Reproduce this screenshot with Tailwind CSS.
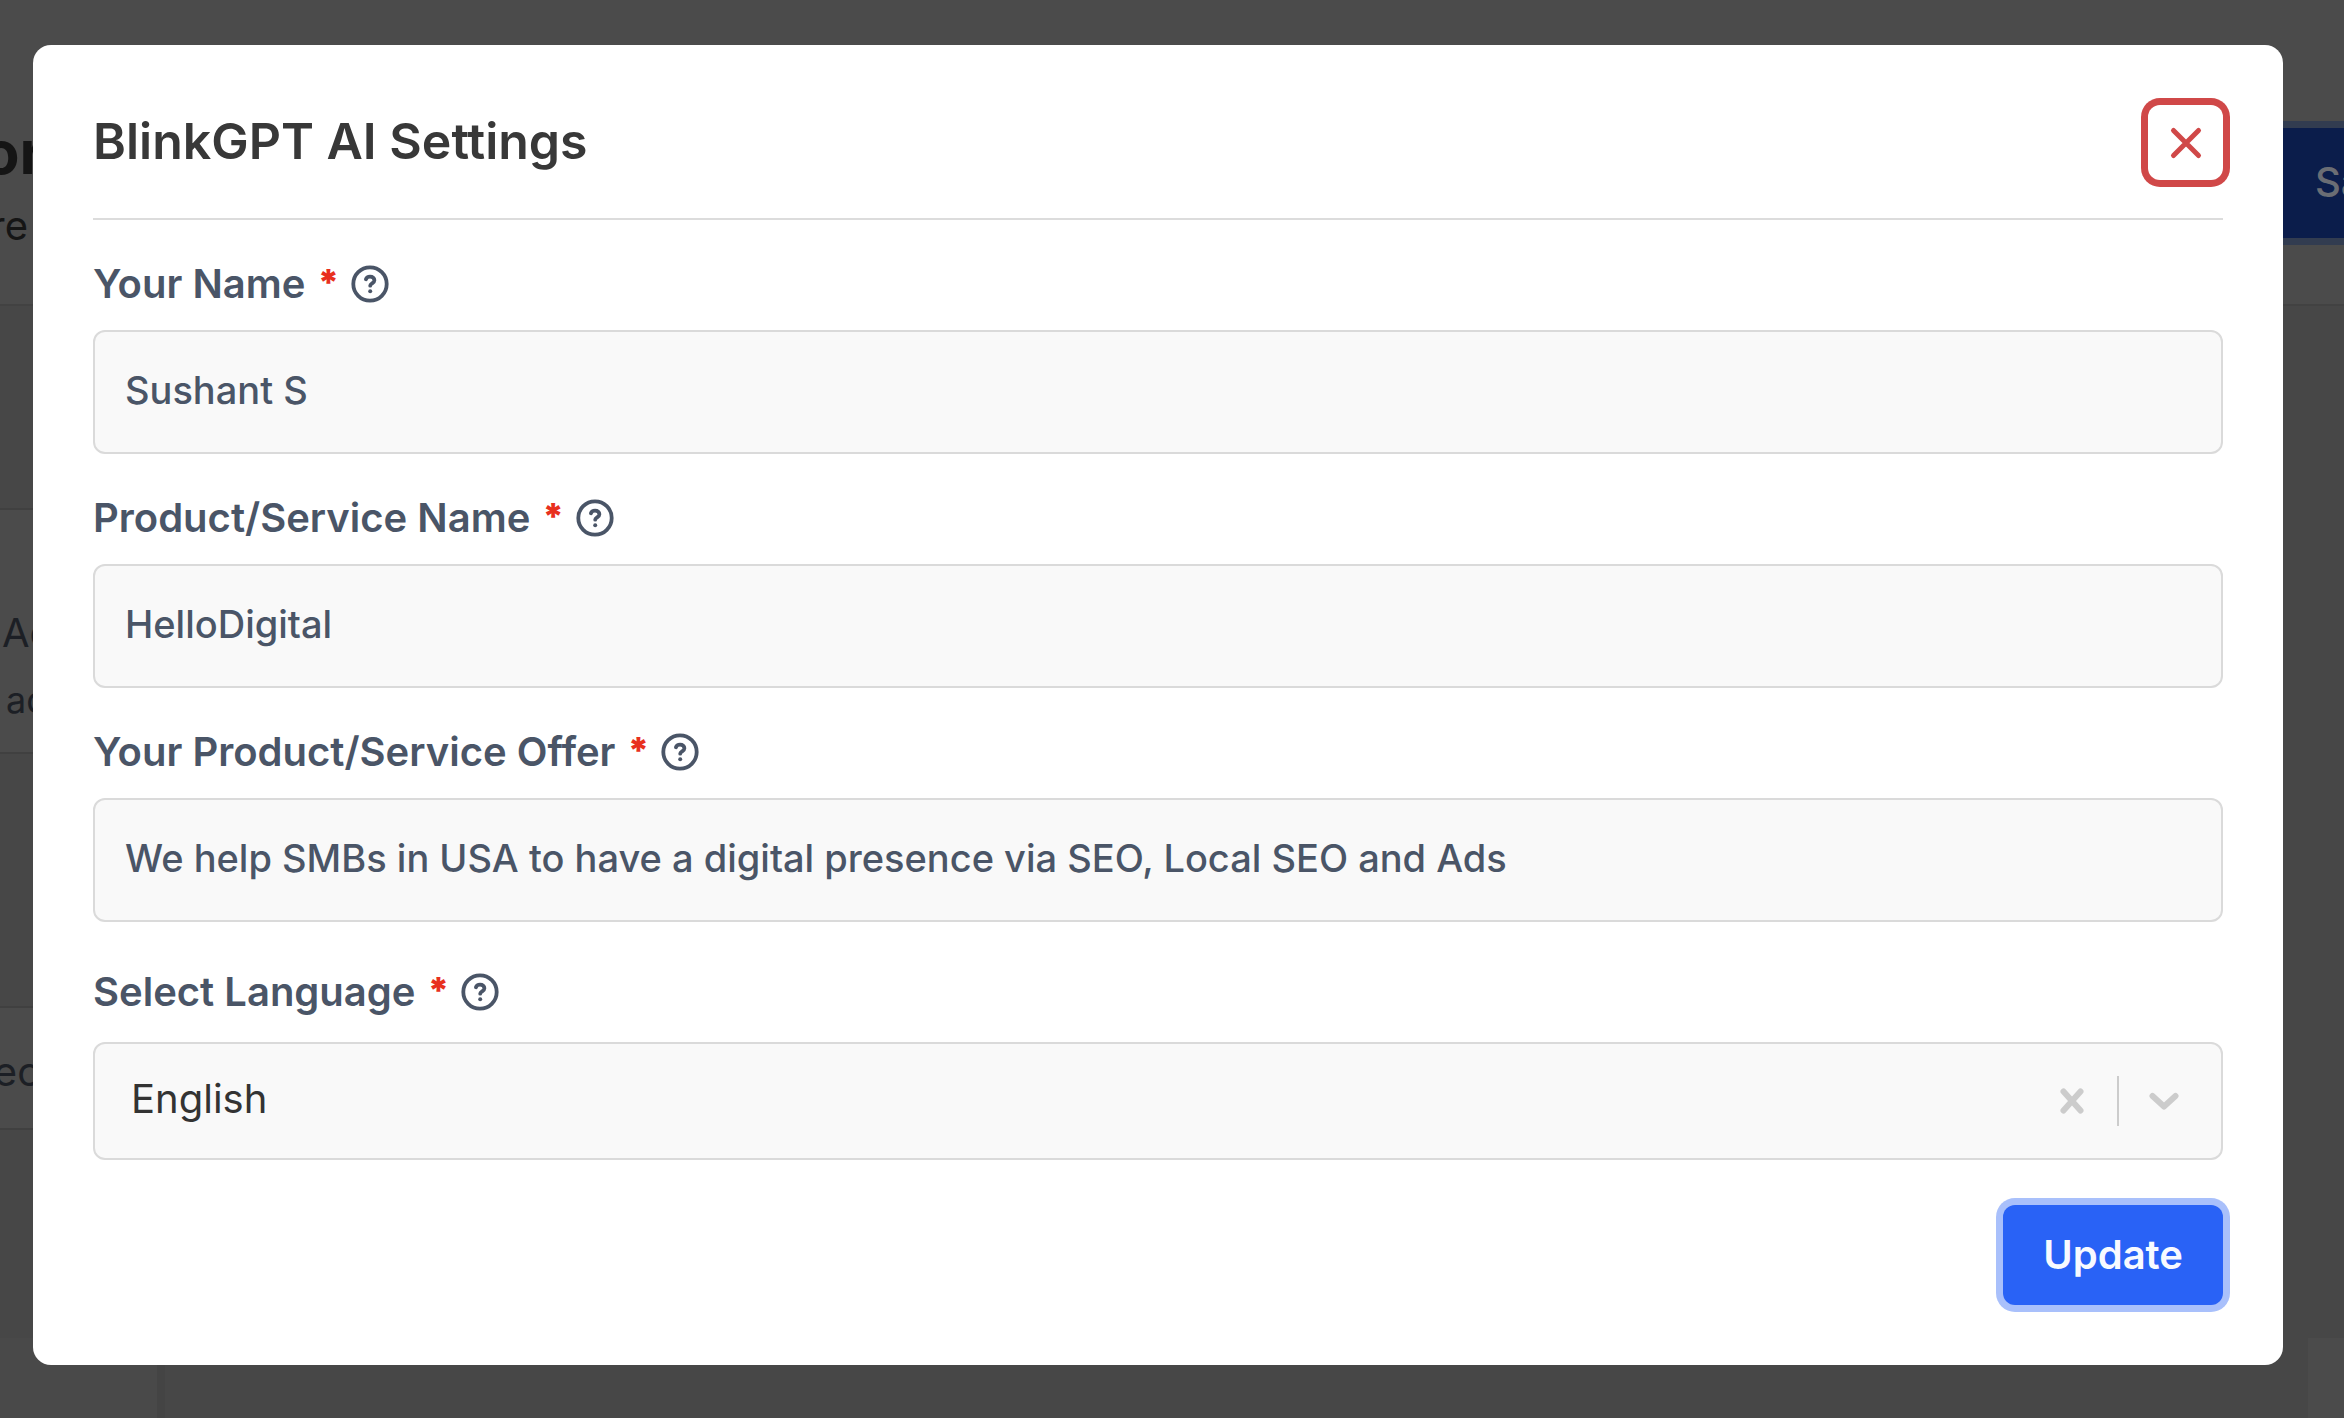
<!DOCTYPE html>
<html lang="en">
<head>
<meta charset="utf-8">
<meta name="viewport" content="width=device-width, initial-scale=1">
<title>BlinkGPT AI Settings</title>
<script src="https://cdn.jsdelivr.net/npm/@tailwindcss/browser@4"></script>
</head>
<body class="relative min-h-screen overflow-hidden bg-[#474747] font-['Inter',sans-serif]">

<!-- icon shared by all field labels -->
<svg class="hidden" aria-hidden="true">
  <symbol id="help" viewBox="0 0 38 38" fill="none" stroke="currentColor" stroke-linecap="round" stroke-linejoin="round">
    <circle cx="19" cy="19" r="16.700" stroke-width="3.800"/>
    <path d="M14.900 14.300C15.500 12.500 17.100 11.700 19.100 11.700c2.600 0 4.300 1.400 4.300 3.500 0 3-4.200 3.100-4.200 5.500" stroke-width="3.800"/>
    <circle cx="19.200" cy="26.200" r="2" fill="currentColor" stroke="none"/>
  </symbol>
</svg>

<!-- dimmed page behind the dialog -->
<div class="absolute inset-0 flex flex-col overflow-hidden whitespace-nowrap text-[40px] leading-[48px] text-[#1c1f25]" aria-hidden="true">
  <header class="flex h-[306px] shrink-0 items-start justify-between border-b-2 border-[#424242] bg-[#4b4b4b] pt-[114px] text-[#151515]">
    <div>
      <p class="flex w-11 justify-end text-[60px] leading-[76px] font-bold">or</p>
      <p class="mt-3 flex w-7 justify-end">re</p>
    </div>
    <button type="button" tabindex="-1" class="mt-3.5 flex h-[110px] w-24 items-center bg-[#0b1d4b] pb-0.5 pl-[67px] font-medium text-[#6a6d74] ring-7 ring-[#323c50]">Save</button>
  </header>
  <section class="mt-[202px] mr-24 h-[246px] shrink-0 border-y-2 border-[#404040] bg-[#4b4b4b] pt-[96px]">
    <p class="pl-0.5 leading-[54px]">Ad</p>
    <p class="mt-4 pl-1.5 text-[36px]">ad</p>
  </section>
  <section class="mt-[252px] mr-24 h-[124px] shrink-0 border-y-2 border-[#404040] bg-[#4b4b4b] pt-[40px]">
    <p class="flex w-10 justify-end">ec</p>
  </section>
  <div class="mt-52 flex grow items-stretch justify-between">
    <div class="w-[165px] border-r-8 border-[#444444] bg-[#494949]"></div>
    <div class="w-9 bg-[#4b4b4b]"></div>
  </div>
</div>

<!-- dialog -->
<main class="relative pt-[45px] pr-[61px] pb-[53px] pl-[33px]">
  <form role="dialog" aria-labelledby="title" class="flex flex-col rounded-[18px] bg-white p-[60px] text-[#4a5567]">
    <div class="flex items-center justify-between border-b-2 border-[#dcdcdc] pb-[38px]">
      <h1 id="title" class="pb-1 text-[50px] leading-[60px] font-semibold text-[#383838]">BlinkGPT AI Settings</h1>
      <button type="button" aria-label="Close" class="flex size-[75px] items-center justify-center rounded-xl text-[#d04848] ring-7 ring-[#d04848]">
        <svg class="size-[34px]" viewBox="0 0 34 34" fill="none" stroke="currentColor" stroke-width="5" stroke-linecap="round"><path d="M4.500 4.500l25 25M29.500 4.500l-25 25"/></svg>
      </button>
    </div>

    <div class="mt-11 flex h-10 items-center text-[40px] leading-10 font-semibold">
      <label for="name">Your Name</label><span class="ml-3 pb-1 text-[36px] font-black text-[#e8301e]">*</span>
      <svg class="ml-3 size-[38px]" role="img" aria-label="Help"><use href="#help"/></svg>
    </div>
    <input id="name" type="text" value="Sushant S" class="mt-[26px] h-[124px] w-full rounded-xl border-2 border-[#dadada] bg-[#f9f9f9] px-[30px] pb-1 text-[38px] font-[450]">

    <div class="mt-11 flex h-10 items-center text-[40px] leading-10 font-semibold">
      <label for="product">Product/Service Name</label><span class="ml-3 pb-1 text-[36px] font-black text-[#e8301e]">*</span>
      <svg class="ml-3 size-[38px]" role="img" aria-label="Help"><use href="#help"/></svg>
    </div>
    <input id="product" type="text" value="HelloDigital" class="mt-[26px] h-[124px] w-full rounded-xl border-2 border-[#dadada] bg-[#f9f9f9] px-[30px] pb-1 text-[38px] font-[450]">

    <div class="mt-11 flex h-10 items-center text-[40px] leading-10 font-semibold">
      <label for="offer">Your Product/Service Offer</label><span class="ml-3 pb-1 text-[36px] font-black text-[#e8301e]">*</span>
      <svg class="ml-3 size-[38px]" role="img" aria-label="Help"><use href="#help"/></svg>
    </div>
    <input id="offer" type="text" value="We help SMBs in USA to have a digital presence via SEO, Local SEO and Ads" class="mt-[26px] h-[124px] w-full rounded-xl border-2 border-[#dadada] bg-[#f9f9f9] px-[30px] pb-1 text-[38px] font-[450]">

    <div class="mt-[50px] flex h-10 items-center text-[40px] leading-10 font-semibold">
      <label for="language">Select Language</label><span class="ml-3 pb-1 text-[36px] font-black text-[#e8301e]">*</span>
      <svg class="ml-3 size-[38px]" role="img" aria-label="Help"><use href="#help"/></svg>
    </div>
    <div class="relative mt-[30px]">
      <select id="language" class="block h-[118px] w-full appearance-none rounded-xl border-2 border-[#dadada] bg-[#f9f9f9] px-9 pb-1 text-[40px] text-[#333333]"><option>English</option></select>
      <div class="pointer-events-none absolute inset-y-0 right-0 flex items-center pr-[43px] text-[#cccccc]">
        <button type="button" aria-label="Clear language" class="pointer-events-auto mr-8">
          <svg class="h-[28px] w-[26px]" viewBox="0 0 26 28" fill="none" stroke="currentColor" stroke-width="6" stroke-linecap="round"><path d="M4.500 4.500l17 19M21.500 4.500l-17 19"/></svg>
        </button>
        <span class="h-[50px] w-0.5 bg-[#cccccc]"></span>
        <svg class="ml-[29px] h-[18px] w-8" viewBox="0 0 32 18" fill="none" stroke="currentColor" stroke-width="6" stroke-linecap="round" stroke-linejoin="round"><path d="M4.500 4L16 14.500 27.500 4"/></svg>
      </div>
    </div>

    <button type="submit" class="mt-[45px] flex h-[100px] items-center justify-center self-end rounded-xl bg-[#2962f6] px-10 text-[40px] font-semibold text-[#f8faff] ring-7 ring-[#a9c0fb]">Update</button>
  </form>
</main>
</body>
</html>
